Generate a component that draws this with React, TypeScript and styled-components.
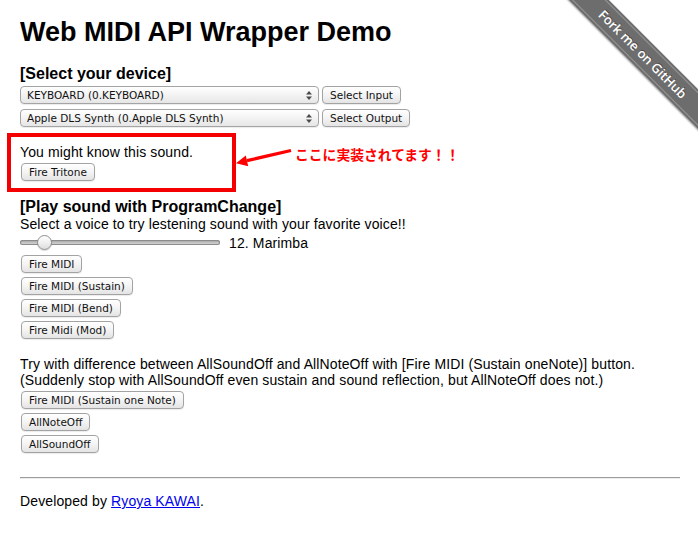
import React, { useState } from 'react';
import styled, { createGlobalStyle } from 'styled-components';

const GlobalStyle = createGlobalStyle`
  html, body {
    margin: 0;
    padding: 0;
    background: #fff;
  }
  body {
    font-family: "Liberation Sans", Arial, Helvetica, sans-serif;
    font-size: 14px;
    line-height: 16px;
    color: #000;
  }
`;

const devices = {
  inputs: ['KEYBOARD (0.KEYBOARD)'],
  outputs: ['Apple DLS Synth (0.Apple DLS Synth)'],
};

const voices: Record<number, string> = { 12: 'Marimba' };

export default function App() {
  const [voice, setVoice] = useState(12);

  return (
    <Page>
      <GlobalStyle />
      <Title>Web MIDI API Wrapper Demo</Title>

      <SectionTitle $top={16}>[Select your device]</SectionTitle>
      <DeviceRow $top={2}>
        <SelectWrap>
          <Select defaultValue={devices.inputs[0]}>
            {devices.inputs.map((d) => (
              <option key={d}>{d}</option>
            ))}
          </Select>
          <SelectArrows />
        </SelectWrap>
        <PushButton>Select Input</PushButton>
      </DeviceRow>
      <DeviceRow $top={4}>
        <SelectWrap>
          <Select defaultValue={devices.outputs[0]}>
            {devices.outputs.map((d) => (
              <option key={d}>{d}</option>
            ))}
          </Select>
          <SelectArrows />
        </SelectWrap>
        <PushButton>Select Output</PushButton>
      </DeviceRow>

      <Callout>
        <Text>You might know this sound.</Text>
        <PushButton $top={3}>Fire Tritone</PushButton>
        <Pointer width="66" height="30" viewBox="0 0 66 30">
          <line x1="63" y1="10.5" x2="19" y2="20.6" stroke="#f00" strokeWidth="3.2" />
          <polygon points="8,23.2 20.2,26.2 17.8,15.4" fill="#f00" />
        </Pointer>
        <Note>ここに実装されてます！！</Note>
      </Callout>

      <SectionTitle $top={5}>[Play sound with ProgramChange]</SectionTitle>
      <Text>Select a voice to try lestening sound with your favorite voice!!</Text>
      <SliderRow>
        <Slider
          type="range"
          min={0}
          max={127}
          value={voice}
          onChange={(e) => setVoice(Number(e.target.value))}
        />
        <SliderLabel>
          {voice}. {voices[voice] ?? 'Voice'}
        </SliderLabel>
      </SliderRow>
      <PushButton $top={4}>Fire MIDI</PushButton>
      <PushButton $top={4}>Fire MIDI (Sustain)</PushButton>
      <PushButton $top={4}>Fire MIDI (Bend)</PushButton>
      <PushButton $top={4}>Fire Midi (Mod)</PushButton>

      <Text $top={17}>
        Try with difference between AllSoundOff and AllNoteOff with [Fire MIDI (Sustain oneNote)] button.
        <br />
        (Suddenly stop with AllSoundOff even sustain and sound reflection, but AllNoteOff does not.)
      </Text>
      <PushButton $top={3}>Fire MIDI (Sustain one Note)</PushButton>
      <PushButton $top={4}>AllNoteOff</PushButton>
      <PushButton $top={4}>AllSoundOff</PushButton>

      <Rule />
      <Text $top={14}>
        Developed by <Link href="#">Ryoya KAWAI</Link>.
      </Text>

      <Ribbon>
        <RibbonBand href="#">Fork me on GitHub</RibbonBand>
      </Ribbon>
    </Page>
  );
}

function SelectArrows() {
  return (
    <ArrowIcon width="6" height="9" viewBox="0 0 6 9">
      <polygon points="3,0 6,3.4 0,3.4" fill="#4a4a4a" />
      <polygon points="3,9 6,5.6 0,5.6" fill="#4a4a4a" />
    </ArrowIcon>
  );
}

const Page = styled.div`
  position: relative;
  min-height: 536px;
  padding: 0 18px 1px 20px;
  overflow: hidden;
`;

const Title = styled.h1`
  margin: 17px 0 0;
  font-size: 27px;
  line-height: 31px;
  font-weight: bold;
`;

const SectionTitle = styled.h3<{ $top?: number }>`
  margin: ${({ $top = 0 }) => $top}px 0 0;
  font-size: 16px;
  line-height: 19px;
  font-weight: bold;
`;

const Text = styled.p<{ $top?: number }>`
  margin: ${({ $top = 0 }) => $top}px 0 0;
  font-size: 14px;
  line-height: 16px;
  letter-spacing: 0.12px;
`;

const DeviceRow = styled.div<{ $top: number }>`
  display: flex;
  align-items: center;
  gap: 3px;
  margin-top: ${({ $top }) => $top}px;
`;

const SelectWrap = styled.span`
  position: relative;
  display: inline-flex;
`;

const Select = styled.select`
  appearance: none;
  -webkit-appearance: none;
  box-sizing: border-box;
  width: 299px;
  height: 18px;
  margin: 0;
  padding: 0 20px 0 6px;
  border: 1px solid #a4a4a4;
  border-radius: 4px;
  background: linear-gradient(#ffffff, #f3f3f3 50%, #e6e6e6);
  box-shadow: 0 1px 1px rgba(0, 0, 0, 0.08);
  font-family: "DejaVu Sans", "Lucida Grande", sans-serif;
  font-size: 10.5px;
  color: #111;
  outline: none;
`;

const ArrowIcon = styled.svg`
  position: absolute;
  right: 7px;
  top: 5px;
  pointer-events: none;
`;

const PushButton = styled.button<{ $top?: number }>`
  display: block;
  box-sizing: border-box;
  height: 18px;
  margin: ${({ $top = 0 }) => $top}px 0 0 1px;
  padding: 0 7px;
  border: 1px solid #a3a3a3;
  border-radius: 4px;
  background: linear-gradient(#ffffff, #f4f4f4 50%, #e4e4e4);
  box-shadow: 0 1px 1px rgba(0, 0, 0, 0.08);
  font-family: "DejaVu Sans", "Lucida Grande", sans-serif;
  font-size: 10.5px;
  line-height: 16px;
  color: #111;
  white-space: nowrap;

  ${DeviceRow} & {
    margin: 1px 0 0;
  }
`;

const Callout = styled.section`
  position: relative;
  box-sizing: border-box;
  width: 229px;
  margin: 6px 0 0 -13px;
  padding: 7px 9px 7px;
  border: 4px solid #f40000;
`;

const Pointer = styled.svg`
  position: absolute;
  left: 217px;
  top: 3px;
`;

const Note = styled.span`
  position: absolute;
  left: 284px;
  top: 9px;
  white-space: nowrap;
  font-family: "Noto Sans CJK JP", sans-serif;
  font-weight: bold;
  font-size: 13.8px;
  line-height: 16px;
  color: #f00;
`;

const SliderRow = styled.div`
  display: flex;
  align-items: center;
  gap: 9px;
  height: 18px;
  margin-top: 1px;
`;

const Slider = styled.input`
  -webkit-appearance: none;
  appearance: none;
  width: 200px;
  height: 18px;
  margin: 0;
  background: transparent;

  &::-webkit-slider-runnable-track {
    height: 5px;
    border-radius: 3px;
    background: linear-gradient(#9b9b9b, #c9c9c9 60%, #d6d6d6);
    box-shadow: inset 0 0 0 1px #8c8c8c;
  }

  &::-webkit-slider-thumb {
    -webkit-appearance: none;
    box-sizing: border-box;
    width: 15px;
    height: 15px;
    margin-top: -5px;
    border: 1px solid #8e8e8e;
    border-radius: 50%;
    background: linear-gradient(#ffffff, #ececec 60%, #dcdcdc);
    box-shadow: 0 1px 1px rgba(0, 0, 0, 0.15);
  }
`;

const SliderLabel = styled.span`
  padding-top: 2px;
  font-size: 14px;
  line-height: 16px;
  letter-spacing: 0.12px;
`;

const Rule = styled.hr`
  height: 0;
  margin: 24px 0 0;
  border: 0;
  border-top: 1px solid #9c9c9c;
  border-bottom: 1px solid #ededed;
`;

const Link = styled.a`
  color: #0000ee;
  text-decoration: underline;
`;

const Ribbon = styled.div`
  position: absolute;
  top: 0;
  right: 0;
  width: 149px;
  height: 149px;
  overflow: hidden;
`;

const RibbonBand = styled.a`
  position: absolute;
  left: -6px;
  top: 40px;
  box-sizing: border-box;
  width: 200px;
  height: 28px;
  transform: rotate(45deg);
  display: flex;
  align-items: center;
  justify-content: center;
  background: #6d6d6d;
  box-shadow: 0 1px 2px rgba(0, 0, 0, 0.45);
  color: #fff;
  font-family: "Open Sans", "Liberation Sans", Arial, sans-serif;
  font-weight: 600;
  font-size: 13px;
  text-decoration: none;
  text-shadow: 0 -1px 0 rgba(0, 0, 0, 0.4);

  &::before,
  &::after {
    content: '';
    position: absolute;
    left: 0;
    right: 0;
    height: 1px;
    background: rgba(255, 255, 255, 0.28);
  }
  &::before {
    top: 2px;
  }
  &::after {
    bottom: 2px;
  }
`;
